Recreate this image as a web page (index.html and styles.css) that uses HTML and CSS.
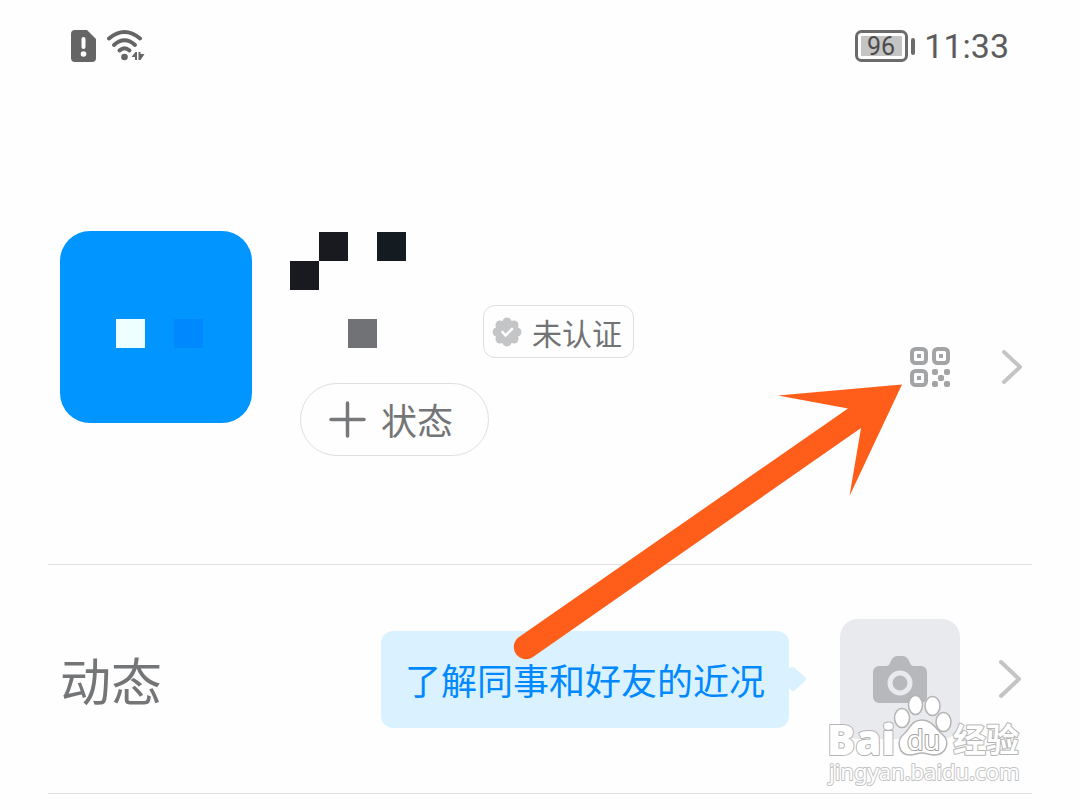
FILE: index.html
```html
<!DOCTYPE html>
<html lang="zh-CN">
<head>
    <meta charset="UTF-8">
    <meta name="viewport" content="width=device-width, initial-scale=1.0">
    <title>动态</title>
    <link rel="stylesheet" href="styles.css">
</head>
<body>
    <div class="screen">
        <header class="status-bar">
            <div class="status-icons">
                <svg width="26" height="32" viewBox="0 0 26 32">
                    <path fill="#656565" d="M4 0h12l9 9v19a4 4 0 0 1-4 4H4a4 4 0 0 1-4-4V4a4 4 0 0 1 4-4z"/>
                    <path stroke="#fff" stroke-width="4" stroke-linecap="round" d="M12.500 9v8"/>
                    <circle cx="12.500" cy="24" r="2.800" fill="#fff"/>
                </svg>
                <svg width="40" height="34" viewBox="0 0 40 34">
                    <g fill="none" stroke="#656565" stroke-width="4" stroke-linecap="round">
                        <path d="M3 9.500Q18.500-3.500 34 9.500"/>
                        <path d="M8 16Q18.500 6.500 29 16"/>
                        <path d="M13.500 21.500Q18.500 17 23.500 21.500"/>
                    </g>
                    <circle cx="18.500" cy="28" r="3.300" fill="#656565"/>
                    <path fill="#656565" d="M25.500 28l4-5h1.500v8h-2v-3zM32.500 31v-8h2v2h4l-4 6z"/>
                </svg>
            </div>
            <div class="status-right">
                <svg width="60" height="32" viewBox="0 0 60 32">
                    <rect x="1.500" y="1.500" width="50" height="29" rx="5" fill="none" stroke="#6b6b6b" stroke-width="3"/>
                    <rect x="6" y="6" width="41" height="20" rx="1" fill="#c4c4c4"/>
                    <text class="battery-text" x="26" y="25" text-anchor="middle">96</text>
                    <path stroke="#6b6b6b" stroke-width="4" stroke-linecap="round" d="M58 10v13"/>
                </svg>
                <span class="time">11:33</span>
            </div>
        </header>

        <section class="profile">
            <svg class="avatar" viewBox="0 0 192 192">
                <rect x="56" y="88" width="29" height="29" fill="#eeffff"/>
                <rect x="114" y="88" width="29" height="29" fill="#0089ff"/>
            </svg>
            <div class="info">
                <svg width="116" height="58" viewBox="0 0 116 58">
                    <rect x="29" width="29" height="29" fill="#191a1f"/>
                    <rect x="87" width="29" height="29" fill="#141c22"/>
                    <rect y="29" width="29" height="29" fill="#191a1f"/>
                </svg>
                <div class="company">
                    <svg width="145" height="53" viewBox="0 0 145 53">
                        <rect x="58" y="14" width="29" height="29" fill="#717275"/>
                    </svg>
                    <div class="badge">
                        <svg width="30" height="30" viewBox="0 0 30 30">
                            <g fill="#c4c5c6">
                                <circle cx="15" cy="15" r="12"/>
                                <circle cx="15" cy="5" r="4.500"/>
                                <circle cx="22" cy="8" r="4.500"/>
                                <circle cx="25" cy="15" r="4.500"/>
                                <circle cx="22" cy="22" r="4.500"/>
                                <circle cx="15" cy="25" r="4.500"/>
                                <circle cx="8" cy="22" r="4.500"/>
                                <circle cx="5" cy="15" r="4.500"/>
                                <circle cx="8" cy="8" r="4.500"/>
                            </g>
                            <path fill="none" stroke="#fff" stroke-width="2.600" stroke-linecap="round" stroke-linejoin="round" d="M10.500 15l3 3.500 6.500-6.500"/>
                        </svg>
                        <span>未认证</span>
                    </div>
                </div>
                <button class="status-btn">
                    <svg width="37" height="37" viewBox="0 0 37 37">
                        <path stroke="#77787a" stroke-width="3.500" stroke-linecap="round" d="M18.500 2v33M2 18.500h33"/>
                    </svg>
                    <span>状态</span>
                </button>
            </div>
            <a class="profile-link" href="#" aria-label="二维码">
                <svg width="40" height="40" viewBox="0 0 40 40" fill="#a3a4a6">
                    <g fill="none" stroke="#a3a4a6" stroke-width="4">
                        <rect x="2" y="2" width="14" height="14" rx="3.500"/>
                        <rect x="24" y="2" width="14" height="14" rx="3.500"/>
                        <rect x="2" y="24" width="14" height="14" rx="3.500"/>
                    </g>
                    <rect x="7" y="7" width="4" height="4"/>
                    <rect x="29" y="7" width="4" height="4"/>
                    <rect x="7" y="29" width="4" height="4"/>
                    <rect x="22" y="22" width="6" height="6" rx="2"/>
                    <rect x="34" y="22" width="6" height="6" rx="2"/>
                    <rect x="28" y="28" width="6" height="6" rx="2"/>
                    <rect x="22" y="34" width="6" height="6" rx="2"/>
                    <rect x="34" y="34" width="6" height="6" rx="2"/>
                </svg>
                <svg width="20" height="36" viewBox="0 0 20 36">
                    <path class="chevron" d="M2 3l16 15L2 33"/>
                </svg>
            </a>
        </section>

        <section class="moments">
            <h2>动态</h2>
            <div class="tip">了解同事和好友的近况
                <svg class="tip-arrow" width="17" height="26" viewBox="0 0 17 26">
                    <path fill="#daf2ff" d="M0 3l2-2q2-1 4 1l10 9q2 2 0 4L5 25q-2 1-3-1l-2-2z"/>
                </svg>
            </div>
            <button class="camera" aria-label="拍照">
                <svg width="56" height="48" viewBox="0 0 56 48">
                    <path fill="#b7b8bc" d="M7 11h8q2 0 3-3l2-4q2-3 5-3h6q3 0 5 3l2 4q1 3 3 3h8a6 6 0 0 1 6 6v25a6 6 0 0 1-6 6H7a6 6 0 0 1-6-6V17a6 6 0 0 1 6-6z"/>
                    <circle cx="28" cy="28" r="10" fill="#b7b8bc" stroke="#e9eaed" stroke-width="5"/>
                </svg>
            </button>
            <svg class="more" width="22" height="40" viewBox="0 0 22 40">
                <path class="chevron" d="M2 3l18 17L2 37"/>
            </svg>
        </section>

        <!-- pointer to the QR code -->
        <svg class="pointer" width="400" height="290" viewBox="510 380 400 290">
            <path fill="#ff5e1a" d="M519 637L848 408.500 778 395.500 902 384.500 849.500 496 861 428 533 657A12 12 0 0 1 519 637z"/>
        </svg>

        <svg class="watermark" width="204" height="98" viewBox="824 692 204 98">
            <g fill="#fff" stroke="#b4b4b4" stroke-width="1.500">
                <ellipse cx="902" cy="718" rx="7.500" ry="9.500"/>
                <ellipse cx="915.500" cy="705" rx="7" ry="9.500"/>
                <ellipse cx="932.500" cy="706" rx="7.500" ry="9.500"/>
                <ellipse cx="943.500" cy="722" rx="7.500" ry="9.500"/>
                <path d="M922 720c-11 0-12 9-18 14-8 6-6 21 6 21 5 0 7-2 12-2s7 2 12 2c13 0 16-14 9-20-7-5-10-15-21-15z"/>
            </g>
            <text class="wm-bai" x="827" y="755">Bai</text>
            <text class="wm-du" x="907" y="750">du</text>
            <text class="wm-cn" x="953" y="752">经验</text>
            <text class="wm-url" x="829" y="780">jingyan.baidu.com</text>
        </svg>
    </div>
</body>
</html>
```
FILE: styles.css
```css
* {
    box-sizing: border-box;
}
body {
    margin: 0;
    background-color: #fefefe;
    font-family: "Noto Sans CJK SC", sans-serif;
    color: #747577;
}
svg {
    display: block;
    flex-shrink: 0;
}
button {
    border: none;
    padding: 0;
    font: inherit;
    color: inherit;
    cursor: pointer;
}
.screen {
    position: relative;
    padding: 0 48px;
}
.status-bar {
    display: flex;
    justify-content: space-between;
    align-items: center;
    height: 92px;
    padding: 0 23px;
}
.status-icons {
    display: flex;
    align-items: center;
    gap: 9px;
}
.status-right {
    display: flex;
    align-items: center;
    gap: 9px;
}
.battery-text {
    font-family: Roboto, sans-serif;
    font-size: 25px;
    fill: #4c4c4c;
}
.time {
    font-family: Roboto, sans-serif;
    font-size: 34px;
    line-height: 40px;
    color: #5c5c5c;
}
.profile {
    display: flex;
    align-items: flex-start;
    padding: 139px 10px 108px 12px;
    border-bottom: 1px solid #dedfe0;
}
.avatar {
    width: 192px;
    height: 192px;
    border-radius: 30px;
    background-color: #0095ff;
}
.info {
    margin-left: 38px;
    padding-top: 1px;
}
.company {
    display: flex;
    gap: 48px;
    margin: 15px 0 25px;
}
.badge {
    display: flex;
    align-items: center;
    gap: 10px;
    height: 53px;
    padding: 0 11px 0 8px;
    border: 1px solid #dedfe0;
    border-radius: 12px;
    font-size: 30px;
    line-height: 44px;
    color: #727375;
}
.status-btn {
    display: flex;
    align-items: center;
    gap: 15px;
    height: 73px;
    margin-left: 10px;
    padding: 0 35px 0 28px;
    border: 1px solid #dedfe0;
    border-radius: 37px;
    background: none;
    font-size: 36px;
    line-height: 53px;
}
.profile-link {
    display: flex;
    align-items: center;
    gap: 52px;
    margin: 116px 0 0 auto;
}
.chevron {
    fill: none;
    stroke: #c4c4c5;
    stroke-width: 4px;
    stroke-linecap: round;
    stroke-linejoin: round;
}
.moments {
    display: flex;
    align-items: center;
    height: 229px;
    padding: 0 11px 0 12px;
    border-bottom: 1px solid #dedfe0;
}
.moments h2 {
    margin: 0 auto 0 0;
    font-size: 51px;
    font-weight: 400;
    line-height: 72px;
}
.tip {
    position: relative;
    padding: 22px 24px;
    border-radius: 12px;
    background-color: #daf2ff;
    font-size: 36px;
    line-height: 53px;
    white-space: nowrap;
    color: #0089ff;
}
.tip-arrow {
    position: absolute;
    left: 100%;
    top: 35px;
}
.camera {
    display: flex;
    align-items: center;
    justify-content: center;
    width: 120px;
    height: 120px;
    margin: 0 39px 0 51px;
    border-radius: 18px;
    background-color: #e9eaed;
}
.pointer {
    position: absolute;
    top: 380px;
    right: 170px;
}
.watermark {
    position: absolute;
    top: 692px;
    right: 52px;
}
.watermark text {
    fill: #fff;
    stroke: #b4b4b4;
    stroke-width: 2px;
    stroke-linejoin: round;
    paint-order: stroke;
}
.wm-bai {
    font-family: "Open Sans", sans-serif;
    font-size: 42px;
    font-weight: 800;
}
.watermark .wm-du {
    font-family: "Noto Sans", sans-serif;
    font-size: 27px;
    stroke: #a0a0a0;
}
.wm-cn {
    font-family: "Noto Sans CJK SC", sans-serif;
    font-size: 33px;
    font-weight: 700;
}
.watermark .wm-url {
    font-family: "Noto Sans", sans-serif;
    font-size: 22px;
    stroke: #c4c4c4;
}
```
